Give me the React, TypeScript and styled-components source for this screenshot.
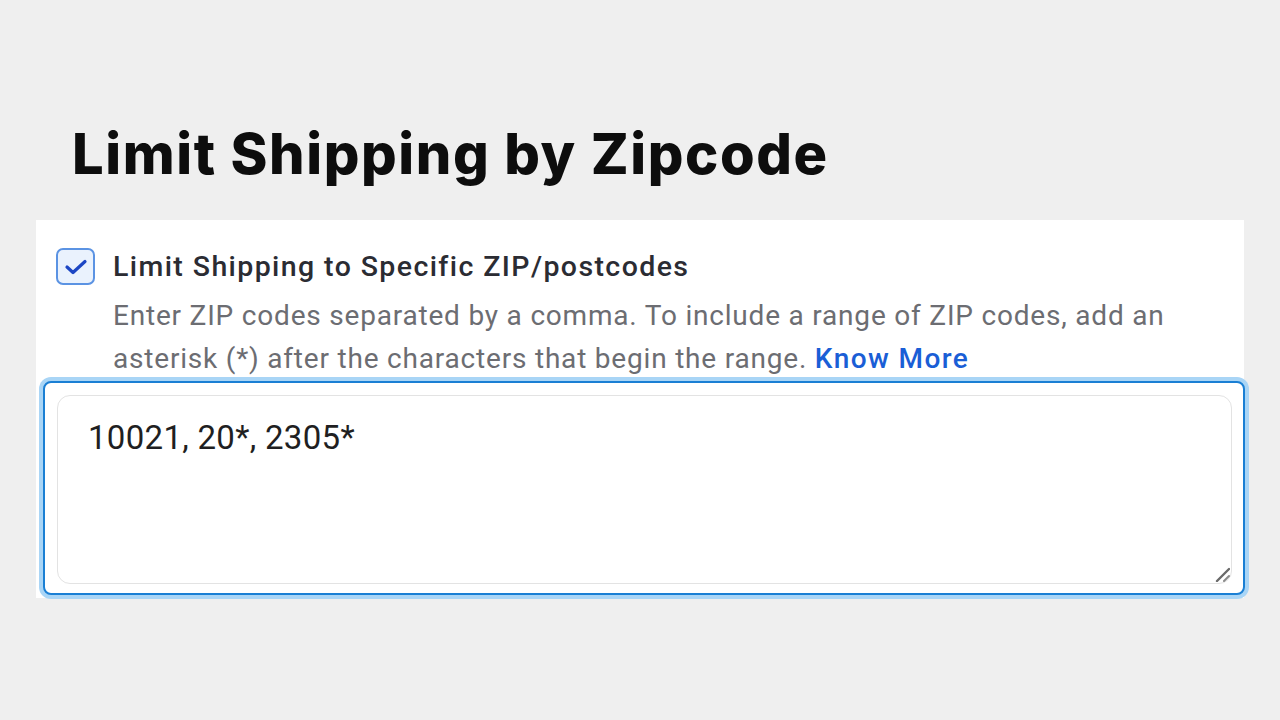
import React from "react";
import styled, { createGlobalStyle } from "styled-components";

const Global = createGlobalStyle`
  html, body { margin: 0; padding: 0; background: #efefef; }
  body { font-family: Roboto, "Liberation Sans", Arial, sans-serif; }
  * { box-sizing: border-box; }
`;

const Page = styled.div`
  width: 1280px;
  height: 720px;
  background: #efefef;
  padding-top: 126px;
  overflow: hidden;
`;

const Title = styled.h1`
  margin: 0 0 38px 0;
  padding-left: 72px;
  font-family: Inter, "Open Sans", sans-serif;
  font-weight: 800;
  font-size: 56px;
  line-height: 56px;
  color: #0d0d0d;
  letter-spacing: 1.6px;
`;

const Card = styled.section`
  margin-left: 36px;
  width: 1208px;
  background: #ffffff;
  padding: 28px 0 3px 0;
`;

const OptionRow = styled.div`
  display: flex;
  align-items: flex-start;
  gap: 18px;
  padding-left: 20px;
`;

const Box = styled.div`
  flex: none;
  width: 39px;
  height: 37px;
  border: 2px solid #5b93e3;
  border-radius: 7px;
  background: #eaf2fd;
  display: flex;
  align-items: center;
  justify-content: center;
`;

const TextCol = styled.div`
  display: flex;
  flex-direction: column;
  padding-top: 1px;
`;

const Label = styled.div`
  font-size: 28.5px;
  line-height: 35px;
  font-weight: 500;
  color: #2b2c33;
  letter-spacing: 1.4px;
`;

const Help = styled.p`
  margin: 10px 0 0 0;
  font-size: 28px;
  line-height: 43px;
  color: #6c6d72;
  letter-spacing: 0.8px;
  width: 1100px;
`;

const Link = styled.a`
  color: #1a5ed6;
  font-weight: 500;
  letter-spacing: 1.4px;
  text-decoration: none;
`;

const Frame = styled.div`
  position: relative;
  margin: 1px 0 0 7px;
  width: 1202px;
  border: 2px solid #1a7fd4;
  border-radius: 8px;
  box-shadow: 0 0 0 4px #a9d5f6;
  background: #ffffff;
  padding: 12px 11px 9px 12px;
`;

const Area = styled.textarea`
  display: block;
  width: 100%;
  height: 189px;
  border: 1px solid #e3e3e3;
  border-radius: 13px;
  padding: 22px 30px;
  font-family: Roboto, "Liberation Sans", sans-serif;
  font-size: 33px;
  line-height: 40px;
  letter-spacing: 0.3px;
  color: #1f1f22;
  outline: none;
  resize: none;
  background: #ffffff;
`;

const Grip = styled.svg`
  position: absolute;
  right: 13px;
  bottom: 11px;
  width: 16px;
  height: 16px;
  pointer-events: none;
`;

export default function App() {
  return (
    <Page>
      <Global />
      <Title>Limit Shipping by Zipcode</Title>
      <Card>
        <OptionRow>
          <Box>
            <svg width="24" height="20" viewBox="0 0 24 20" fill="none">
              <polyline
                points="3,10 9,15.5 21,4.5"
                stroke="#1c46c4"
                strokeWidth="3.2"
                strokeLinecap="round"
                strokeLinejoin="round"
              />
            </svg>
          </Box>
          <TextCol>
            <Label>Limit Shipping to Specific ZIP/postcodes</Label>
            <Help>
              Enter ZIP codes separated by a comma. To include a range of ZIP codes, add an
              asterisk (*) after the characters that begin the range. <Link href="#">Know More</Link>
            </Help>
          </TextCol>
        </OptionRow>
        <Frame>
          <Area defaultValue="10021, 20*, 2305*" />
          <Grip viewBox="0 0 16 16" fill="none">
            <line x1="3" y1="15" x2="15" y2="3" stroke="#6a6a6a" strokeWidth="2.4" strokeLinecap="round" />
            <line x1="10" y1="15" x2="15" y2="10" stroke="#8a8a8a" strokeWidth="2" strokeLinecap="round" />
          </Grip>
        </Frame>
      </Card>
    </Page>
  );
}
